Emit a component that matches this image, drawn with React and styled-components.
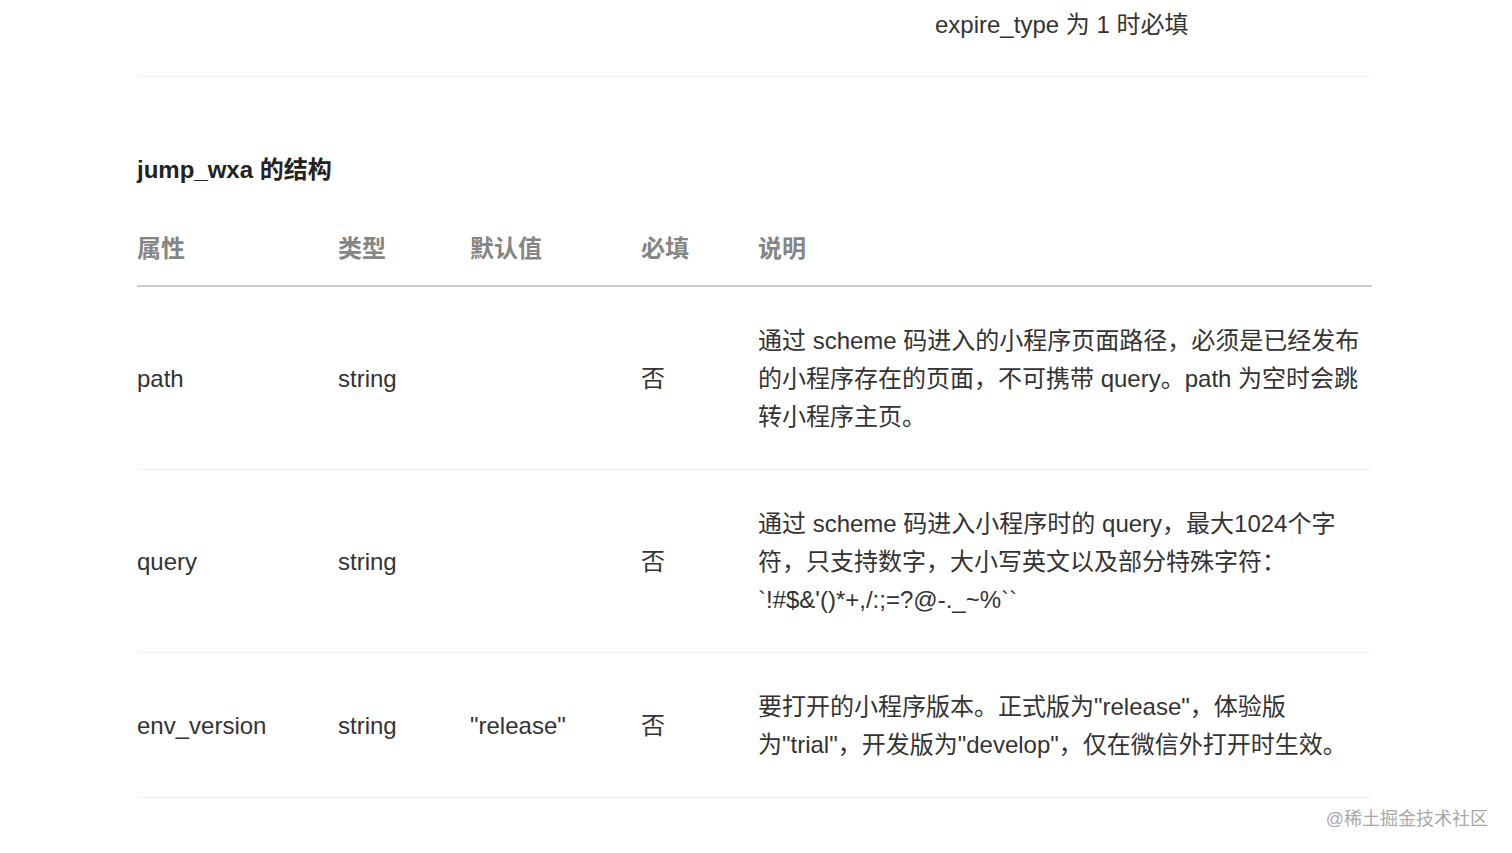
import React from 'react'
import styled, { createGlobalStyle } from 'styled-components'

const NoWrap = styled.span`
  white-space: nowrap;
`

const rows = [
  {
    name: 'path',
    type: 'string',
    def: '',
    required: '否',
    desc: <>通过 scheme 码进入的小程序页面路径，必须是已经发布的小程序存在的页面，不可携带 query。path 为空时会跳转小程序主页。</>,
  },
  {
    name: 'query',
    type: 'string',
    def: '',
    required: '否',
    desc: (
      <>
        通过 scheme 码进入小程序时的 query，最大1024个字符，只支持数字，大小写英文以及部分特殊字符：
        <NoWrap>`!#$&amp;'()*+,/:;=?@-._~%``</NoWrap>
      </>
    ),
  },
  {
    name: 'env_version',
    type: 'string',
    def: '"release"',
    required: '否',
    desc: (
      <>
        要打开的小程序版本。正式版为"release"，体验版<NoWrap>为"trial"，</NoWrap>开发版为"develop"，仅在微信外打开时生效。
      </>
    ),
  },
]

const App = () => {
  return (
    <Page>
      <GlobalStyle />
      <Content>
        <TailRow>expire_type 为 1 时必填</TailRow>
        <Heading>jump_wxa 的结构</Heading>
        <Table>
          <colgroup>
            <col style={{ width: 201 }} />
            <col style={{ width: 132 }} />
            <col style={{ width: 171 }} />
            <col style={{ width: 117 }} />
            <col />
          </colgroup>
          <thead>
            <tr>
              <Th>属性</Th>
              <Th>类型</Th>
              <Th>默认值</Th>
              <Th>必填</Th>
              <Th>说明</Th>
            </tr>
          </thead>
          <tbody>
            {rows.map((r) => (
              <tr key={r.name}>
                <Td>{r.name}</Td>
                <Td>{r.type}</Td>
                <Td>{r.def}</Td>
                <Td>{r.required}</Td>
                <Td>{r.desc}</Td>
              </tr>
            ))}
          </tbody>
        </Table>
      </Content>
      <Watermark>@稀土掘金技术社区</Watermark>
    </Page>
  )
}

export default App

const GlobalStyle = createGlobalStyle`
  html, body {
    margin: 0;
    background: #fff;
  }
  body {
    font-family: "Liberation Sans", "Noto Sans CJK SC", sans-serif;
    color: #333;
  }
`

const Page = styled.div`
  position: relative;
  width: 1512px;
  height: 853px;
  overflow: hidden;
  background: #fff;
`

const Content = styled.div`
  width: 1235px;
  margin-left: 137px;
`

const TailRow = styled.div`
  padding: 6px 0 32px 798px;
  font-size: 24px;
  line-height: 38px;
  border-bottom: 1px solid #f0f0f0;
`

const Heading = styled.h3`
  margin: 74px 0 41px;
  font-size: 24px;
  line-height: 38px;
  font-weight: 700;
  color: #222;
`

const Table = styled.table`
  width: 1235px;
  table-layout: fixed;
  border-collapse: collapse;
  font-size: 24px;
  line-height: 38px;
`

const Th = styled.th`
  text-align: left;
  padding: 0 0 17px;
  font-weight: 700;
  color: #858585;
  border-bottom: 2px solid #cccccc;
`

const Td = styled.td`
  padding: 35px 8px 33px 0;
  vertical-align: middle;
  color: #333;
  border-bottom: 1px solid #f0f0f0;
  &:last-child {
    padding-right: 0;
  }
`

const Watermark = styled.div`
  position: absolute;
  right: 24px;
  bottom: 22px;
  font-size: 18px;
  line-height: 24px;
  color: #a8a8a8;
  text-shadow: 0 0 2px #fff;
`
